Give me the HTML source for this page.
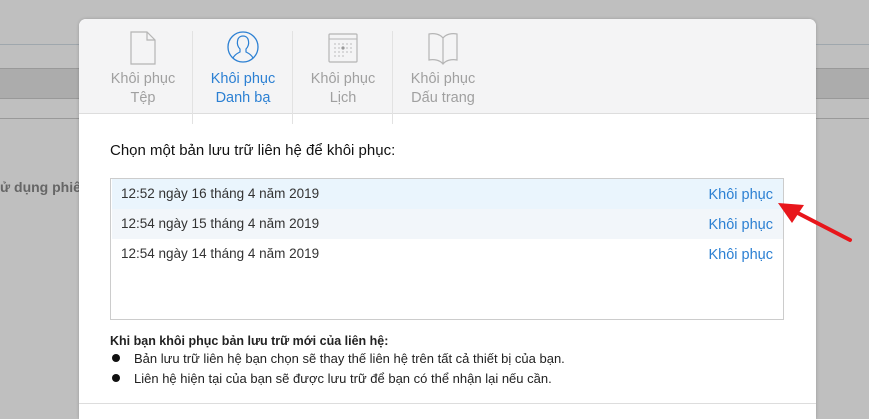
<!DOCTYPE html>
<html><head><meta charset="utf-8"><style>
*{margin:0;padding:0;box-sizing:border-box}
body{width:869px;height:408px;overflow:hidden;background:#bfbfbf;font-family:"Liberation Sans",sans-serif;position:relative}
.bg{position:absolute;left:0;right:0}
.modal{position:absolute;left:79px;top:19px;width:737px;height:400px;background:#fff;border-radius:7px 7px 0 0;overflow:hidden;box-shadow:0 0 3px rgba(0,0,0,.2)}
.hdr{position:absolute;left:0;top:0;width:100%;height:95px;background:#f4f4f5;border-bottom:1px solid #ddd}
.tab{position:absolute;top:0;width:100px;height:95px;text-align:center;color:#a0a0a0;font-size:14.5px;line-height:19px}
.tab .t{position:absolute;top:51px;left:0;width:100%}
.div{position:absolute;top:12px;width:1px;height:93px;background:#e2e2e2}
.tab svg{position:absolute;top:12px;left:34px}
.row{position:absolute;left:1px;width:671px;height:30px;font-size:13.5px;color:#333;line-height:30px;padding-left:9px}
.row span{position:absolute;right:10px;top:1px;color:#2c80d3;font-size:14.5px}
.note{position:absolute;left:110px;font-size:13px;color:#222}
.dot{position:absolute;left:112px;width:8px;height:8px;border-radius:50%;background:#111}
</style></head><body>
<div class="bg" style="top:44px;height:1px;background:#9fa7ad"></div>
<div class="bg" style="top:68px;height:31px;background:#acacac;border-top:1px solid #999;border-bottom:1px solid #999"></div>
<div class="bg" style="top:118px;height:1px;background:#999"></div>
<div style="position:absolute;left:0;top:179px;font-size:14px;font-weight:bold;color:#666">ử dụng phiê</div>

<div class="modal">
 <div class="hdr"></div>
 <div class="tab" style="left:14px">
  <svg width="32" height="34" viewBox="0 0 32 34"><path d="M4 1H20L28 9V33H4Z M20 1V9H28" fill="none" stroke="#b5b5b5" stroke-width="1.2"/></svg>
  <div class="t">Khôi phục<br>Tệp</div></div>
 <div class="div" style="left:113px"></div>
 <div class="tab" style="left:114px;color:#2c80d3">
  <svg width="32" height="34" viewBox="0 0 32 34"><circle cx="16" cy="16" r="15" fill="none" stroke="#2c80d3" stroke-width="1.3"/><path d="M6 27C8 23 11 22 13 21V18C11 16 10 13 10.5 10C11 6 14 5 16 5C18 5 21 6 21.5 10C22 13 21 16 19 18V21C21 22 24 23 26 27" fill="none" stroke="#2c80d3" stroke-width="1.2"/></svg>
  <div class="t">Khôi phục<br>Danh bạ</div></div>
 <div class="div" style="left:213px"></div>
 <div class="tab" style="left:214px">
  <svg width="32" height="34" viewBox="0 0 32 34"><rect x="2" y="3" width="28" height="28" rx="1" fill="none" stroke="#b5b5b5" stroke-width="1.2"/><line x1="2" y1="8" x2="30" y2="8" stroke="#b5b5b5"/><g fill="#c5c5c5"><circle cx="8" cy="13" r=".9"/><circle cx="12" cy="13" r=".9"/><circle cx="16" cy="13" r=".9"/><circle cx="20" cy="13" r=".9"/><circle cx="24" cy="13" r=".9"/><circle cx="8" cy="17" r=".9"/><circle cx="12" cy="17" r=".9"/><circle cx="16" cy="17" r="1.6" fill="#999"/><circle cx="20" cy="17" r=".9"/><circle cx="24" cy="17" r=".9"/><circle cx="8" cy="21" r=".9"/><circle cx="12" cy="21" r=".9"/><circle cx="16" cy="21" r=".9"/><circle cx="20" cy="21" r=".9"/><circle cx="24" cy="21" r=".9"/><circle cx="8" cy="25" r=".9"/><circle cx="12" cy="25" r=".9"/><circle cx="16" cy="25" r=".9"/></g></svg>
  <div class="t">Khôi phục<br>Lịch</div></div>
 <div class="div" style="left:313px"></div>
 <div class="tab" style="left:314px">
  <svg width="32" height="34" viewBox="0 0 32 34"><path d="M16 7C13 3 7 2 2 3V29C7 28 13 29 16 33C19 29 25 28 30 29V3C25 2 19 3 16 7Z M16 7V33" fill="none" stroke="#b5b5b5" stroke-width="1.2"/></svg>
  <div class="t">Khôi phục<br>Dấu trang</div></div>

 <div style="position:absolute;left:31px;top:123px;font-size:15px;color:#111">Chọn một bản lưu trữ liên hệ để khôi phục:</div>
 <div style="position:absolute;left:31px;top:159px;width:674px;height:142px;border:1px solid #ccc">
  <div class="row" style="top:0;background:#eaf5fd">12:52 ngày 16 tháng 4 năm 2019<span>Khôi phục</span></div>
  <div class="row" style="top:30px;background:#f2f6fa">12:54 ngày 15 tháng 4 năm 2019<span>Khôi phục</span></div>
  <div class="row" style="top:60px">12:54 ngày 14 tháng 4 năm 2019<span>Khôi phục</span></div>
 </div>
 <div style="position:absolute;left:0;top:384px;width:100%;height:1px;background:#ddd"></div>
</div>
<div class="note" style="top:334px;font-weight:bold;font-size:12.5px">Khi bạn khôi phục bản lưu trữ mới của liên hệ:</div>
<div class="dot" style="top:354px"></div><div class="note" style="left:134px;top:351px">Bản lưu trữ liên hệ bạn chọn sẽ thay thế liên hệ trên tất cả thiết bị của bạn.</div>
<div class="dot" style="top:374px"></div><div class="note" style="left:134px;top:371px">Liên hệ hiện tại của bạn sẽ được lưu trữ để bạn có thể nhận lại nếu cần.</div>
<svg style="position:absolute;left:770px;top:195px" width="90" height="55"><line x1="80" y1="45" x2="20" y2="14" stroke="#e8161b" stroke-width="4" stroke-linecap="round"/><path d="M8 8L34 10L22 28Z" fill="#e8161b"/></svg>
</body></html>
